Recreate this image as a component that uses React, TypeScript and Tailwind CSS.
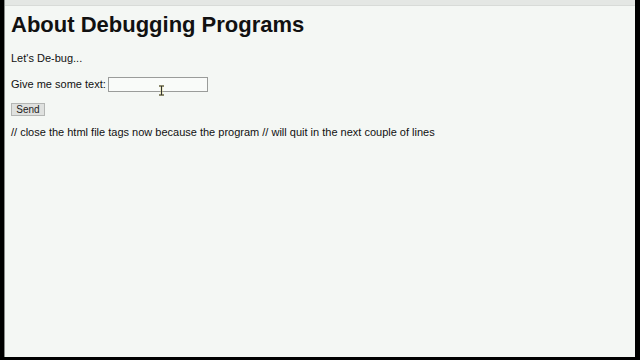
import React from "react";

const App = () => {
  return (
    <div className="w-[640px] h-[360px] bg-black pl-[4px] pr-[5px] pb-[3px] flex">
      <div className="flex-1 flex flex-col bg-[#f4f7f4] border-l border-[#8a8d8a] font-['Liberation_Sans',Arial,sans-serif] text-[#111]">
        {/* browser chrome strip */}
        <div className="h-[6px] bg-[#e4e7e4] border-b border-[#d8dbd8]" />

        <div className="relative flex-1 pl-[6px] pt-[6px]">
          <h1 className="text-[22px] leading-[26px] font-bold">About Debugging Programs</h1>

          <p className="mt-[14px] text-[11px] leading-[13px]">Let's De-bug...</p>

          <div className="mt-[12px] flex items-center gap-[2px] text-[11px] leading-[13px]">
            <span>Give me some text:</span>
            <input
              type="text"
              className="w-[100px] h-[15px] bg-[#f9fbf9] border border-[#9a9c9a] outline-none"
            />
          </div>

          <button className="mt-[11px] block w-[34px] h-[13px] bg-[#dfe1df] border border-[#b4b6b4] text-[10px] leading-[11px] text-[#222]">
            Send
          </button>

          <p className="mt-[10px] text-[11px] leading-[13px]">
            // close the html file tags now because the program // will quit in the next couple of lines
          </p>

          {/* text cursor over the input */}
          <svg className="absolute left-[153px] top-[79px]" width="7" height="11" viewBox="0 0 7 11">
            <path d="M1 1h5M3.5 1v9M1 10h5" stroke="#d8d070" strokeWidth="2.2" fill="none" opacity="0.6" />
            <path d="M1 1h5M3.5 1v9M1 10h5" stroke="#333" strokeWidth="1" fill="none" />
          </svg>
        </div>
      </div>
    </div>
  );
};

export default App;
